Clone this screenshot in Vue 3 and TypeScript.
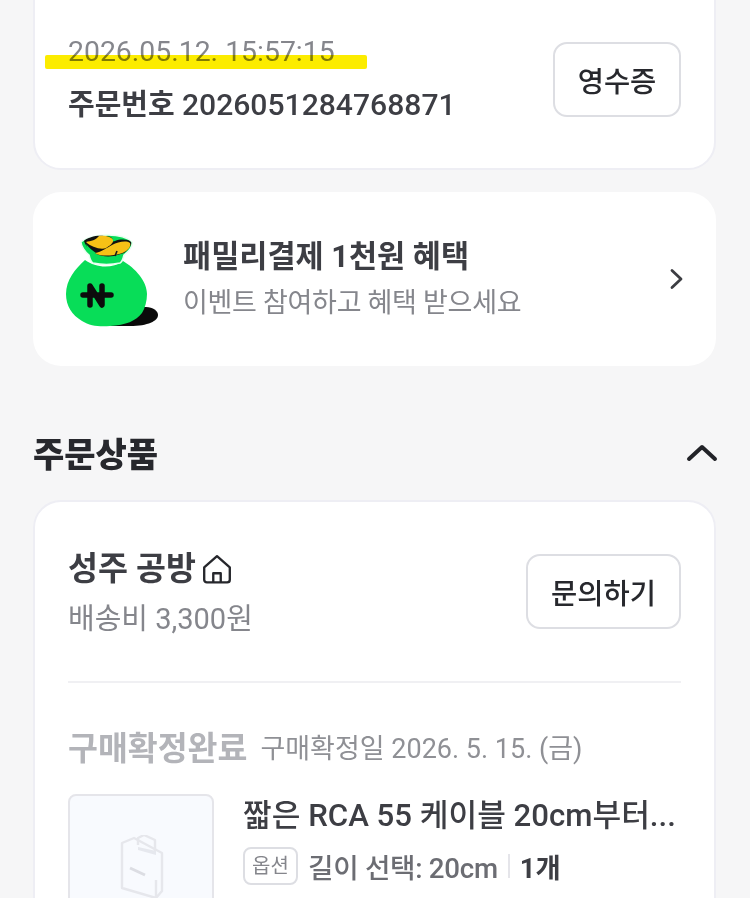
<template>
  <div class="page">
    <section class="card order-card">
      <div class="order-info">
        <div class="date-wrap">
          <p class="order-date">2026.05.12. 15:57:15</p>
          <span class="highlight"></span>
        </div>
        <p class="order-no"><b>주문번호</b> <span>2026051284768871</span></p>
      </div>
      <button class="outline-btn receipt-btn">영수증</button>
    </section>

    <section class="benefit-card">
      <svg class="money-bag" width="94" height="94" viewBox="0 0 94 94">
        <path d="M60 73h20c7 0 12 4 12 8 0 6-10 11-28 11H44Z" fill="#0a0a0a" />
        <path d="M19 26C9 35 0 46 0 60c0 12 6 21 16 27 8 5 18 6 28 5 16-1 26-5 32-13 3-5 5-12 5-19 0-13-12-26-24-33-11 8-27 7-38-1Z" fill="#08dd58" />
        <path d="M15 8c6-5 16-7 27-7 9 0 19 2 24 7 1 4-3 9-8 13-1 4-2 7-4 8-9 2-18 2-27 0-2-1-3-4-4-8-4-3-8-9-8-13Z" fill="#08dd58" stroke="#e8fff0" stroke-width="1.500" />
        <path d="M18 7c4-4 13-6 20-5 6 0 11 2 7 6l4-1c5-2 13-2 16 1 1 3-3 8-7 11l-10 3c-8 1-15 0-19-3-4-1-9-6-11-12Z" fill="#111" />
        <path d="M20 8c5-1 10-2 13-6 6-1 13 1 14 4 1 3-4 6-7 8-5 2-15-1-20-6Z" fill="#f7c116" />
        <path d="M29 19c7-1 11-5 17-8 6-3 14-5 18-2 1 3-1 6-4 8-4 3-8 3-12 4-7 1-15 1-19-2Z" fill="#f7c116" />
        <path d="M20 10c3 4 7 7 10 9l-6 1c-2-3-3-7-4-10Z" fill="#08dd58" />
        <path d="M49 22l2-5" fill="none" stroke="#1a1a1a" stroke-width="1.600" />
        <path d="M24 71V52l12 19V52M17 61h28" fill="none" stroke="#0c0c0c" stroke-width="5.500" stroke-linecap="round" stroke-linejoin="round" />
      </svg>
      <div class="benefit-text">
        <strong>패밀리결제 1천원 혜택</strong>
        <span>이벤트 참여하고 혜택 받으세요</span>
      </div>
      <svg class="chevron" width="16" height="24" viewBox="0 0 16 24">
        <path d="M3 3.500 12 12 3 20.500" fill="none" stroke="#3c3d42" stroke-width="2.800" stroke-linecap="round" stroke-linejoin="round" />
      </svg>
    </section>

    <header class="section-head">
      <h2>주문상품</h2>
      <svg width="32" height="20" viewBox="0 0 32 20">
        <path d="M3 16 16 4 29 16" fill="none" stroke="#222328" stroke-width="4" stroke-linecap="round" stroke-linejoin="round" />
      </svg>
    </header>

    <section class="card product-card">
      <div class="store-row">
        <div>
          <div class="store-name">
            성주 공방
            <svg width="32" height="32" viewBox="0 0 30 30">
              <path d="M3 13.500 15 3l12 10.500V25a2.500 2.500 0 0 1-2.500 2.500h-19A2.500 2.500 0 0 1 3 25ZM11.500 27.500V19h7v8.500" fill="none" stroke="#26272c" stroke-width="2.200" stroke-linejoin="round" />
            </svg>
          </div>
          <p class="shipping">배송비 3,300원</p>
        </div>
        <button class="outline-btn ask-btn">문의하기</button>
      </div>

      <hr />

      <div class="status-row">
        <strong>구매확정완료</strong>
        <span>구매확정일 2026. 5. 15. (금)</span>
      </div>

      <div class="item-row">
        <div class="thumb">
          <svg width="46" height="64" viewBox="0 0 46 64">
            <path d="M20 12l18 4v4l-18-5Z" fill="#e6e8ee" />
            <path d="M4 8l12-5 28 15v38l-6 7-34-10ZM38 45v18" fill="none" stroke="#e6e7ec" stroke-width="2.400" stroke-linejoin="round" />
            <path d="M20 10V3l6-3 11 5v11" fill="none" stroke="#e6e7ec" stroke-width="2.400" stroke-linejoin="round" />
            <path d="M12 33l15 7" stroke="#dcdde3" stroke-width="3" />
          </svg>
        </div>
        <div class="item-info">
          <p class="item-title">짧은 RCA 55 케이블 20cm부터...</p>
          <div class="item-option">
            <span class="tag">옵션</span>
            <span class="option-value">길이 선택: 20cm</span>
            <i></i>
            <b>1개</b>
          </div>
        </div>
      </div>
    </section>
  </div>
</template>

<script setup lang="ts"></script>

<style>
html,
body {
  background: #f6f6f7;
}
</style>

<style scoped>
.page {
  height: 898px;
  overflow: hidden;
  padding: 0 34px 0 33px;
  box-sizing: border-box;
  background: #f6f6f7;
  color: #3d3e44;
  font-family: Roboto, "Noto Sans CJK KR", sans-serif;
}

p,
h2 {
  margin: 0;
}

.card {
  background: #fff;
  border: 2px solid #eeeef4;
  border-radius: 28px;
}

.order-card {
  display: flex;
  align-items: center;
  justify-content: space-between;
  height: 200px;
  margin-top: -30px;
  padding: 0 33px 0 33px;
  box-sizing: border-box;
}

.order-info {
  padding-top: 17px;
}

.date-wrap {
  position: relative;
}

.order-date {
  position: relative;
  font-size: 28.4px;
  line-height: 36px;
  color: #85868c;
}

.highlight {
  position: absolute;
  left: -23px;
  top: 21px;
  width: 322px;
  height: 14px;
  background: #fcec00;
  border-radius: 2px;
  mix-blend-mode: multiply;
}

.order-no {
  margin-top: 16px;
  font-size: 29px;
  line-height: 38px;
  white-space: nowrap;
}

.order-no b {
  font-weight: 700;
}

.order-no span {
  font-size: 30.1px;
  font-weight: 500;
}

.outline-btn {
  background: #fff;
  border: 2px solid #dddee3;
  border-radius: 14px;
  color: #27282d;
  font-family: inherit;
  font-weight: 500;
  font-size: 28.500px;
  padding: 0;
}

.receipt-btn {
  width: 128px;
  height: 75px;
  margin-top: 18px;
}

.benefit-card {
  display: flex;
  align-items: center;
  height: 174px;
  margin-top: 22px;
  padding: 0 28px 0 33px;
  box-sizing: border-box;
  background: #fff;
  border-radius: 28px;
}

.money-bag {
  flex: none;
  margin-top: 3px;
}

.benefit-text {
  display: flex;
  flex-direction: column;
  gap: 8px;
  flex: 1;
  margin-left: 23px;
}

.benefit-text strong {
  font-size: 30.600px;
  line-height: 40px;
  font-weight: 700;
  color: #3d3e44;
}

.benefit-text span {
  font-size: 27px;
  line-height: 36px;
  letter-spacing: -0.3px;
  color: #85868c;
}

.chevron {
  margin: 0 3px 0 0;
}

.section-head {
  display: flex;
  align-items: center;
  justify-content: space-between;
  height: 134px;
  padding: 39px 0 0;
  box-sizing: border-box;
}

.section-head h2 {
  font-size: 34px;
  font-weight: 800;
  color: #27282d;
}

.section-head svg {
  margin-right: -2px;
}

.product-card {
  padding: 44px 33px 0;
  height: 500px;
  box-sizing: border-box;
}

.store-row {
  display: flex;
  align-items: flex-start;
  justify-content: space-between;
}

.store-name {
  display: flex;
  align-items: center;
  gap: 5px;
  font-size: 32.600px;
  line-height: 46px;
  font-weight: 700;
  color: #3d3e44;
}

.shipping {
  margin-top: 8px;
  font-size: 29px;
  line-height: 38px;
  color: #85868c;
}

.ask-btn {
  width: 155px;
  height: 75px;
  margin-top: 8px;
}

hr {
  margin: 43px 0 0;
  border: 0;
  border-top: 2px solid #f0f0f3;
}

.status-row {
  display: flex;
  align-items: center;
  gap: 13px;
  margin-top: 43px;
  line-height: 46px;
}

.status-row strong {
  font-size: 32.500px;
  font-weight: 700;
  color: #b3b4b9;
}

.status-row span {
  font-size: 27px;
  color: #8f9095;
}

.item-row {
  display: flex;
  gap: 29px;
  margin-top: 22px;
}

.thumb {
  display: flex;
  justify-content: center;
  align-items: center;
  flex: none;
  width: 146px;
  height: 146px;
  box-sizing: border-box;
  background: #f8fafe;
  border: 2px solid #e5e5ea;
  border-radius: 8px;
}

.item-title {
  font-size: 31.200px;
  line-height: 44px;
  font-weight: 500;
  color: #3d3e44;
  white-space: nowrap;
}

.item-option {
  display: flex;
  align-items: center;
  margin-top: 8px;
}

.tag {
  width: 55px;
  height: 38px;
  margin-right: 10px;
  box-sizing: border-box;
  border: 2px solid #dddee3;
  border-radius: 8px;
  font-size: 20px;
  line-height: 34px;
  text-align: center;
  color: #85868c;
}

.option-value {
  font-size: 27.700px;
  font-weight: 500;
  letter-spacing: -0.3px;
  color: #6c6d73;
}

.item-option i {
  width: 2px;
  height: 24px;
  margin: 0 10px;
  background: #e5e5ea;
}

.item-option b {
  font-size: 27.500px;
  font-weight: 700;
  color: #3d3e44;
}
</style>
